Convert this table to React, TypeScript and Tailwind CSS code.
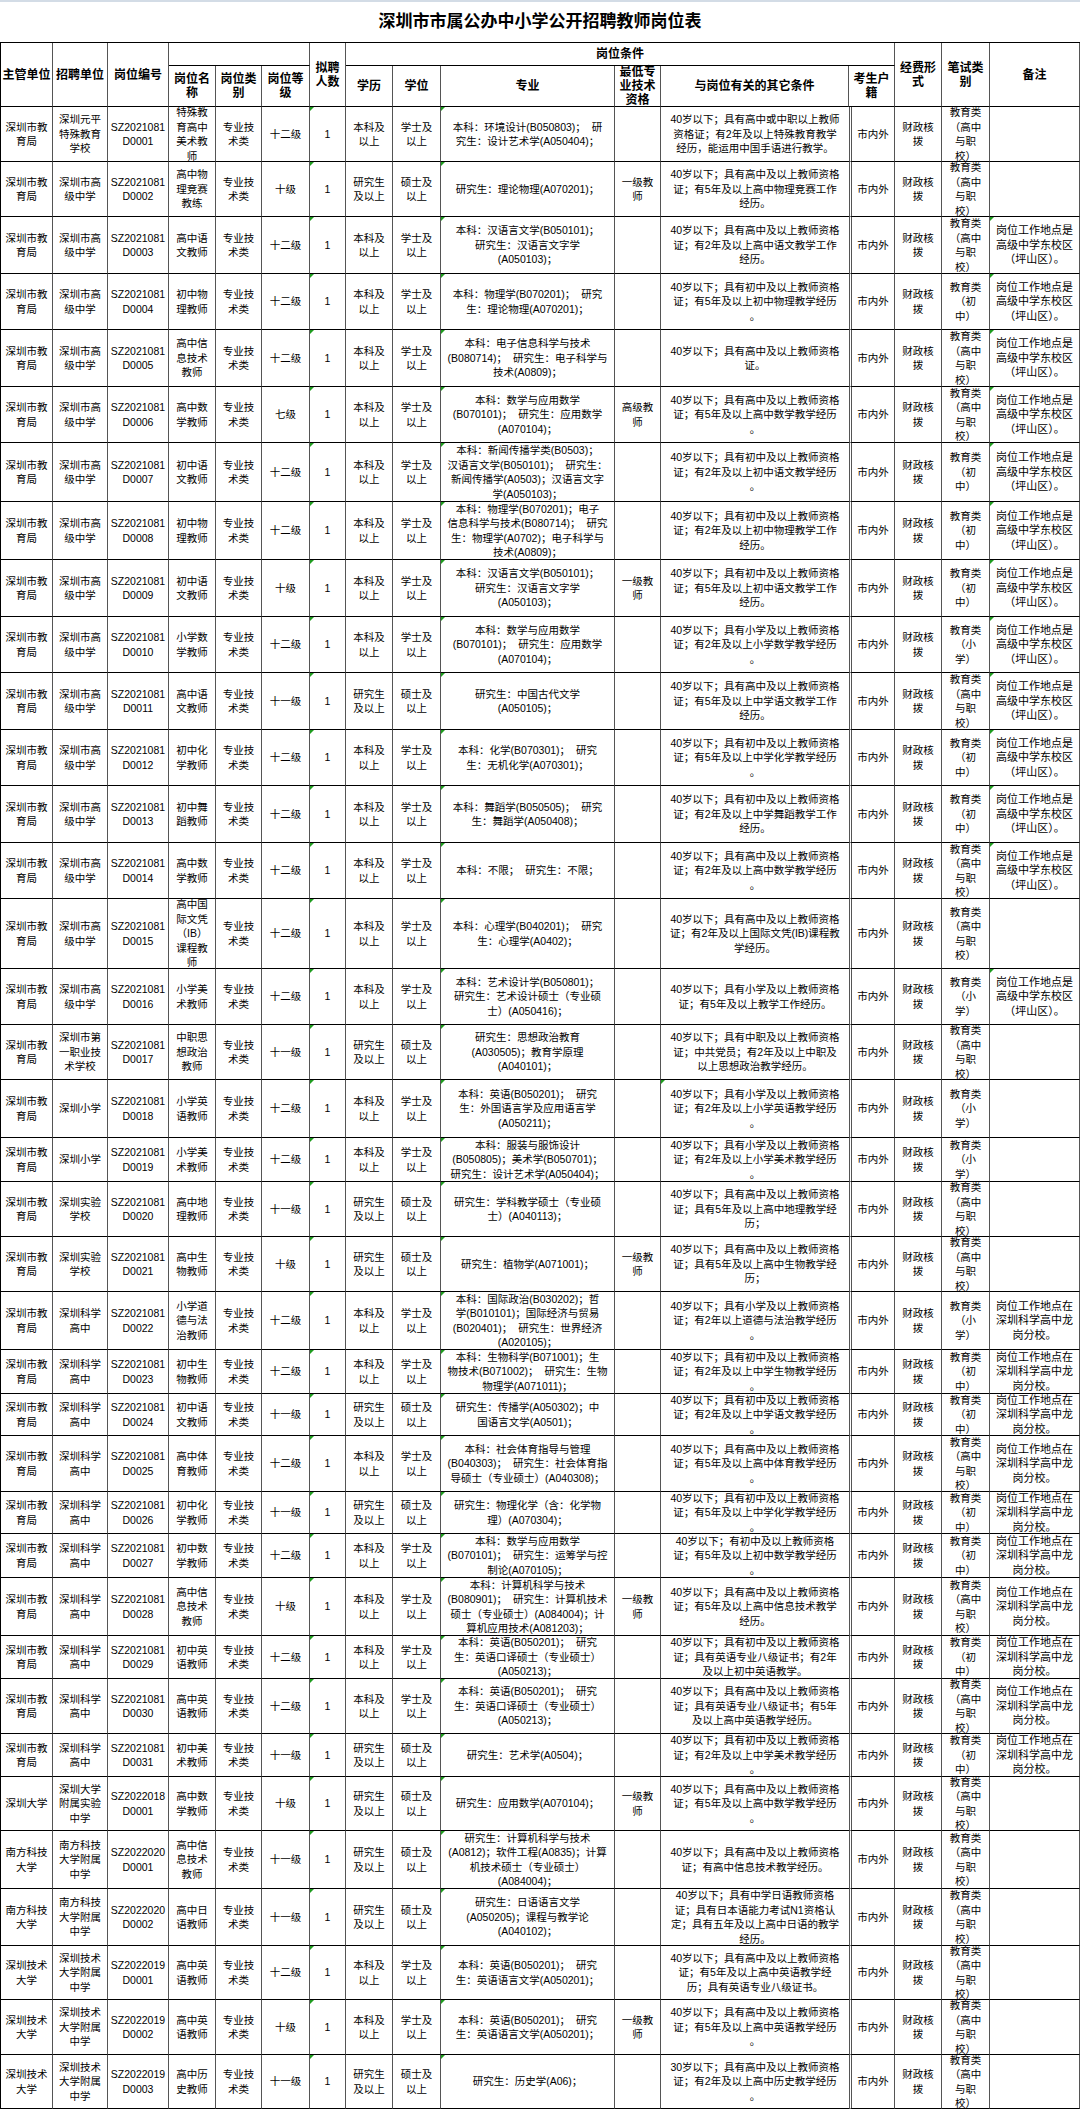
import type { ReactNode } from 'react'

const COLS =
  'grid grid-cols-[52px_55px_61px_47px_46px_48px_36px_47px_48px_174px_46px_188px_46px_47px_48px_90px]'

const ORG = '深圳市教\n育局'
const GAO = '深圳市高\n级中学'
const KX = '深圳科学\n高中'
const EXAM = {
  g: '教育类\n（高中\n与职\n校）',
  c: '教育类\n（初\n中）',
  x: '教育类\n（小\n学）',
}
const NOTE = ['', '岗位工作地点是\n高级中学东校区\n（坪山区）。', '岗位工作地点在\n深圳科学高中龙\n岗分校。']
const LVL1 = '一级教\n师'

type Row = {
  h: string
  org?: string
  unit: string
  code: string
  name: string
  grade: string
  y?: boolean
  major: string
  lvl?: string
  cond: string
  ex: 'g' | 'c' | 'x'
  note?: 1 | 2
  cm?: boolean
}

const ROWS: Row[] = [
  { h: 'h-[55px]', unit: '深圳元平\n特殊教育\n学校', code: 'SZ2021081\nD0001', name: '特殊教\n育高中\n美术教\n师', grade: '十二级', major: '本科：环境设计(B050803)；  研\n究生：设计艺术学(A050404)；', cond: '40岁以下；具有高中或中职以上教师\n资格证；有2年及以上特殊教育教学\n经历，能运用中国手语进行教学。', ex: 'g' },
  { h: 'h-[55px]', unit: GAO, code: 'SZ2021081\nD0002', name: '高中物\n理竞赛\n教练', grade: '十级', y: true, major: '研究生：理论物理(A070201)；', lvl: LVL1, cond: '40岁以下；具有高中及以上教师资格\n证；有5年及以上高中物理竞赛工作\n经历。', ex: 'g' },
  { h: 'h-[57px]', unit: GAO, code: 'SZ2021081\nD0003', name: '高中语\n文教师', grade: '十二级', major: '本科：汉语言文学(B050101)；\n研究生：汉语言文字学\n(A050103)；', cond: '40岁以下；具有高中及以上教师资格\n证；有2年及以上高中语文教学工作\n经历。', ex: 'g', note: 1 },
  { h: 'h-[56px]', unit: GAO, code: 'SZ2021081\nD0004', name: '初中物\n理教师', grade: '十二级', major: '本科：物理学(B070201)；  研究\n生：理论物理(A070201)；', cond: '40岁以下；具有初中及以上教师资格\n证；有5年及以上初中物理教学经历\n。', ex: 'c', note: 1 },
  { h: 'h-[57px]', unit: GAO, code: 'SZ2021081\nD0005', name: '高中信\n息技术\n教师', grade: '十二级', major: '本科：电子信息科学与技术\n(B080714)；  研究生：电子科学与\n技术(A0809)；', cond: '40岁以下；具有高中及以上教师资格\n证。', ex: 'g', note: 1 },
  { h: 'h-[56px]', unit: GAO, code: 'SZ2021081\nD0006', name: '高中数\n学教师', grade: '七级', major: '本科：数学与应用数学\n(B070101)；  研究生：应用数学\n(A070104)；', lvl: '高级教\n师', cond: '40岁以下；具有高中及以上教师资格\n证；有5年及以上高中数学教学经历\n。', ex: 'g', note: 1 },
  { h: 'h-[59px]', unit: GAO, code: 'SZ2021081\nD0007', name: '初中语\n文教师', grade: '十二级', major: '本科：新闻传播学类(B0503)；\n汉语言文学(B050101)；  研究生：\n新闻传播学(A0503)；汉语言文字\n学(A050103)；', cond: '40岁以下；具有初中及以上教师资格\n证；有2年及以上初中语文教学经历\n。', ex: 'c', note: 1 },
  { h: 'h-[58px]', unit: GAO, code: 'SZ2021081\nD0008', name: '初中物\n理教师', grade: '十二级', major: '本科：物理学(B070201)；电子\n信息科学与技术(B080714)；  研究\n生：物理学(A0702)；电子科学与\n技术(A0809)；', cond: '40岁以下；具有初中及以上教师资格\n证；有2年及以上初中物理教学工作\n经历。', ex: 'c', note: 1 },
  { h: 'h-[57px]', unit: GAO, code: 'SZ2021081\nD0009', name: '初中语\n文教师', grade: '十级', major: '本科：汉语言文学(B050101)；\n研究生：汉语言文字学\n(A050103)；', lvl: LVL1, cond: '40岁以下；具有初中及以上教师资格\n证；有5年及以上初中语文教学工作\n经历。', ex: 'c', note: 1 },
  { h: 'h-[56px]', unit: GAO, code: 'SZ2021081\nD0010', name: '小学数\n学教师', grade: '十二级', major: '本科：数学与应用数学\n(B070101)；  研究生：应用数学\n(A070104)；', cond: '40岁以下；具有小学及以上教师资格\n证；有2年及以上小学数学教学经历\n。', ex: 'x', note: 1 },
  { h: 'h-[57px]', unit: GAO, code: 'SZ2021081\nD0011', name: '高中语\n文教师', grade: '十一级', y: true, major: '研究生：中国古代文学\n(A050105)；', cond: '40岁以下；具有高中及以上教师资格\n证；有5年及以上中学语文教学工作\n经历。', ex: 'g', note: 1 },
  { h: 'h-[56px]', unit: GAO, code: 'SZ2021081\nD0012', name: '初中化\n学教师', grade: '十二级', major: '本科：化学(B070301)；  研究\n生：无机化学(A070301)；', cond: '40岁以下；具有初中及以上教师资格\n证；有5年及以上中学化学教学经历\n。', ex: 'c', note: 1 },
  { h: 'h-[57px]', unit: GAO, code: 'SZ2021081\nD0013', name: '初中舞\n蹈教师', grade: '十二级', major: '本科：舞蹈学(B050505)；  研究\n生：舞蹈学(A050408)；', cond: '40岁以下；具有初中及以上教师资格\n证；有2年及以上中学舞蹈教学工作\n经历。', ex: 'c', note: 1 },
  { h: 'h-[56px]', unit: GAO, code: 'SZ2021081\nD0014', name: '高中数\n学教师', grade: '十二级', major: '本科：不限；  研究生：不限；', cond: '40岁以下；具有高中及以上教师资格\n证；有2年及以上高中数学教学经历\n。', ex: 'g', note: 1 },
  { h: 'h-[70px]', unit: GAO, code: 'SZ2021081\nD0015', name: '高中国\n际文凭\n（IB）\n课程教\n师', grade: '十二级', major: '本科：心理学(B040201)；  研究\n生：心理学(A0402)；', cond: '40岁以下；具有高中及以上教师资格\n证；有2年及以上国际文凭(IB)课程教\n学经历。', ex: 'g' },
  { h: 'h-[56px]', unit: GAO, code: 'SZ2021081\nD0016', name: '小学美\n术教师', grade: '十二级', major: '本科：艺术设计学(B050801)；\n研究生：艺术设计硕士（专业硕\n士）(A050416)；', cond: '40岁以下；具有小学及以上教师资格\n证；有5年及以上教学工作经历。', ex: 'x', note: 1 },
  { h: 'h-[55px]', unit: '深圳市第\n一职业技\n术学校', code: 'SZ2021081\nD0017', name: '中职思\n想政治\n教师', grade: '十一级', y: true, major: '研究生：思想政治教育\n(A030505)；教育学原理\n(A040101)；', cond: '40岁以下；具有中职及以上教师资格\n证；中共党员；有2年及以上中职及\n以上思想政治教学经历。', ex: 'g' },
  { h: 'h-[58px]', unit: '深圳小学', code: 'SZ2021081\nD0018', name: '小学英\n语教师', grade: '十二级', major: '本科：英语(B050201)；  研究\n生：外国语言学及应用语言学\n(A050211)；', cond: '40岁以下；具有小学及以上教师资格\n证；有2年及以上小学英语教学经历\n。', ex: 'x', cm: true },
  { h: 'h-[44px]', unit: '深圳小学', code: 'SZ2021081\nD0019', name: '小学美\n术教师', grade: '十二级', major: '本科：服装与服饰设计\n(B050805)；美术学(B050701)；\n研究生：设计艺术学(A050404)；', cond: '40岁以下；具有小学及以上教师资格\n证；有2年及以上小学美术教学经历\n。', ex: 'x' },
  { h: 'h-[55px]', unit: '深圳实验\n学校', code: 'SZ2021081\nD0020', name: '高中地\n理教师', grade: '十一级', y: true, major: '研究生：学科教学硕士（专业硕\n士）(A040113)；', cond: '40岁以下；具有高中及以上教师资格\n证；具有5年及以上高中地理教学经\n历；', ex: 'g' },
  { h: 'h-[55px]', unit: '深圳实验\n学校', code: 'SZ2021081\nD0021', name: '高中生\n物教师', grade: '十级', y: true, major: '研究生：植物学(A071001)；', lvl: LVL1, cond: '40岁以下；具有高中及以上教师资格\n证；具有5年及以上高中生物教学经\n历；', ex: 'g' },
  { h: 'h-[58px]', unit: KX, code: 'SZ2021081\nD0022', name: '小学道\n德与法\n治教师', grade: '十二级', major: '本科：国际政治(B030202)；哲\n学(B010101)；国际经济与贸易\n(B020401)；  研究生：世界经济\n(A020105)；', cond: '40岁以下；具有小学及以上教师资格\n证；有2年以上道德与法治教学经历\n。', ex: 'x', note: 2 },
  { h: 'h-[44px]', unit: KX, code: 'SZ2021081\nD0023', name: '初中生\n物教师', grade: '十二级', major: '本科：生物科学(B071001)；生\n物技术(B071002)；  研究生：生物\n物理学(A071011)；', cond: '40岁以下；具有初中及以上教师资格\n证；有2年及以上中学生物教学经历\n。', ex: 'c', note: 2 },
  { h: 'h-[42px]', unit: KX, code: 'SZ2021081\nD0024', name: '初中语\n文教师', grade: '十一级', y: true, major: '研究生：传播学(A050302)；中\n国语言文学(A0501)；', cond: '40岁以下；具有初中及以上教师资格\n证；有2年及以上中学语文教学经历\n。', ex: 'c', note: 2 },
  { h: 'h-[56px]', unit: KX, code: 'SZ2021081\nD0025', name: '高中体\n育教师', grade: '十二级', major: '本科：社会体育指导与管理\n(B040303)；  研究生：社会体育指\n导硕士（专业硕士）(A040308)；', cond: '40岁以下；具有高中及以上教师资格\n证；有5年及以上高中体育教学经历\n。', ex: 'g', note: 2 },
  { h: 'h-[42px]', unit: KX, code: 'SZ2021081\nD0026', name: '初中化\n学教师', grade: '十一级', y: true, major: '研究生：物理化学（含：化学物\n理）(A070304)；', cond: '40岁以下；具有初中及以上教师资格\n证；有5年及以上中学化学教学经历\n。', ex: 'c', note: 2 },
  { h: 'h-[44px]', unit: KX, code: 'SZ2021081\nD0027', name: '初中数\n学教师', grade: '十二级', major: '本科：数学与应用数学\n(B070101)；  研究生：运筹学与控\n制论(A070105)；', cond: '40岁以下；有初中及以上教师资格\n证；有5年及以上初中数学教学经历\n。', ex: 'c', note: 2 },
  { h: 'h-[58px]', unit: KX, code: 'SZ2021081\nD0028', name: '高中信\n息技术\n教师', grade: '十级', major: '本科：计算机科学与技术\n(B080901)；  研究生：计算机技术\n硕士（专业硕士）(A084004)；计\n算机应用技术(A081203)；', lvl: LVL1, cond: '40岁以下；具有高中及以上教师资格\n证；有5年及以上高中信息技术教学\n经历。', ex: 'g', note: 2 },
  { h: 'h-[43px]', unit: KX, code: 'SZ2021081\nD0029', name: '初中英\n语教师', grade: '十二级', major: '本科：英语(B050201)；  研究\n生：英语口译硕士（专业硕士）\n(A050213)；', cond: '40岁以下；具有初中及以上教师资格\n证；具有英语专业八级证书；有2年\n及以上初中英语教学。', ex: 'c', note: 2 },
  { h: 'h-[55px]', unit: KX, code: 'SZ2021081\nD0030', name: '高中英\n语教师', grade: '十二级', major: '本科：英语(B050201)；  研究\n生：英语口译硕士（专业硕士）\n(A050213)；', cond: '40岁以下；具有高中及以上教师资格\n证；具有英语专业八级证书；有5年\n及以上高中英语教学经历。', ex: 'g', note: 2 },
  { h: 'h-[43px]', unit: KX, code: 'SZ2021081\nD0031', name: '初中美\n术教师', grade: '十一级', y: true, major: '研究生：艺术学(A0504)；', cond: '40岁以下；具有初中及以上教师资格\n证；有2年及以上中学美术教学经历\n。', ex: 'c', note: 2 },
  { h: 'h-[54px]', org: '深圳大学', unit: '深圳大学\n附属实验\n中学', code: 'SZ2022018\nD0001', name: '高中数\n学教师', grade: '十级', y: true, major: '研究生：应用数学(A070104)；', lvl: LVL1, cond: '40岁以下；具有高中及以上教师资格\n证；有5年及以上高中数学教学经历\n。', ex: 'g' },
  { h: 'h-[58px]', org: '南方科技\n大学', unit: '南方科技\n大学附属\n中学', code: 'SZ2022020\nD0001', name: '高中信\n息技术\n教师', grade: '十一级', y: true, major: '研究生：计算机科学与技术\n(A0812)；软件工程(A0835)；计算\n机技术硕士（专业硕士）\n(A084004)；', cond: '40岁以下；具有高中及以上教师资格\n证；有高中信息技术教学经历。', ex: 'g' },
  { h: 'h-[57px]', org: '南方科技\n大学', unit: '南方科技\n大学附属\n中学', code: 'SZ2022020\nD0002', name: '高中日\n语教师', grade: '十一级', y: true, major: '研究生：日语语言文学\n(A050205)；课程与教学论\n(A040102)；', cond: '40岁以下；具有中学日语教师资格\n证；具有日本语能力考试N1资格认\n定；具有五年及以上高中日语的教学\n经历。', ex: 'g' },
  { h: 'h-[54px]', org: '深圳技术\n大学', unit: '深圳技术\n大学附属\n中学', code: 'SZ2022019\nD0001', name: '高中英\n语教师', grade: '十二级', major: '本科：英语(B050201)；  研究\n生：英语语言文学(A050201)；', cond: '40岁以下；具有高中及以上教师资格\n证；有5年及以上高中英语教学经\n历；具有英语专业八级证书。', ex: 'g' },
  { h: 'h-[55px]', org: '深圳技术\n大学', unit: '深圳技术\n大学附属\n中学', code: 'SZ2022019\nD0002', name: '高中英\n语教师', grade: '十级', major: '本科：英语(B050201)；  研究\n生：英语语言文学(A050201)；', lvl: LVL1, cond: '40岁以下；具有高中及以上教师资格\n证；有5年及以上高中英语教学经历\n。', ex: 'g' },
  { h: 'h-[54px]', org: '深圳技术\n大学', unit: '深圳技术\n大学附属\n中学', code: 'SZ2022019\nD0003', name: '高中历\n史教师', grade: '十一级', y: true, major: '研究生：历史学(A06)；', cond: '30岁以下；具有高中及以上教师资格\n证；有2年及以上高中历史教学经历\n。', ex: 'g' },
]

function Cell({
  children,
  className = '',
  mark = false,
}: {
  children?: ReactNode
  className?: string
  mark?: boolean
}) {
  return (
    <div
      className={`relative flex items-center justify-center overflow-hidden border-r border-b border-r-[#555] border-b-black text-center whitespace-pre ${className}`}
    >
      {mark && (
        <span className="absolute top-0 left-0 h-0 w-0 border-t-[4px] border-r-[4px] border-t-[#1f9d1f] border-r-transparent" />
      )}
      {children}
    </div>
  )
}

function Head({ children, className = '' }: { children?: ReactNode; className?: string }) {
  return (
    <div
      className={`flex items-center justify-center border-r border-b border-r-[#555] border-b-black text-center text-[12px] leading-[14px] font-bold whitespace-pre ${className}`}
    >
      {children}
    </div>
  )
}

export default function App() {
  return (
    <div className="w-[1080px] bg-white pb-[2px] font-['Liberation_Sans','Noto_Sans_CJK_SC',sans-serif] text-black">
      <div className="flex h-[42px] items-center justify-center border-t-2 border-[#d3dce6]">
        <h1 className="text-[17px] font-bold">深圳市市属公办中小学公开招聘教师岗位表</h1>
      </div>

      <div className="border-l border-l-black">
        {/* 表头 */}
        <div className={`${COLS} grid-rows-[23px_41px] border-t border-t-black`}>
          <Head className="row-span-2">主管单位</Head>
          <Head className="row-span-2">招聘单位</Head>
          <Head className="row-span-2">岗位编号</Head>
          <Head className="col-span-3" />
          <Head className="row-span-2">{'拟聘\n人数'}</Head>
          <Head className="col-span-6">岗位条件</Head>
          <Head className="row-span-2">{'经费形\n式'}</Head>
          <Head className="row-span-2">{'笔试类\n别'}</Head>
          <Head className="row-span-2">备注</Head>
          <Head>{'岗位名\n称'}</Head>
          <Head>{'岗位类\n别'}</Head>
          <Head>{'岗位等\n级'}</Head>
          <Head>学历</Head>
          <Head>学位</Head>
          <Head>专业</Head>
          <Head>{'最低专\n业技术\n资格'}</Head>
          <Head>与岗位有关的其它条件</Head>
          <Head>{'考生户\n籍'}</Head>
        </div>

        {/* 岗位行 */}
        <div className="text-[10.5px] leading-[14.5px]">
          {ROWS.map((r) => (
            <div key={r.code} className={`${COLS} ${r.h}`}>
              <Cell>{r.org ?? ORG}</Cell>
              <Cell>{r.unit}</Cell>
              <Cell>{r.code}</Cell>
              <Cell>{r.name}</Cell>
              <Cell>{'专业技\n术类'}</Cell>
              <Cell>{r.grade}</Cell>
              <Cell mark>1</Cell>
              <Cell>{r.y ? '研究生\n及以上' : '本科及\n以上'}</Cell>
              <Cell>{r.y ? '硕士及\n以上' : '学士及\n以上'}</Cell>
              <Cell mark>{r.major}</Cell>
              <Cell>{r.lvl ?? ''}</Cell>
              <Cell mark={r.cm} className="border-r-0">
                {r.cond}
              </Cell>
              <Cell className="border-l-[3px] border-double border-l-[#555]">市内外</Cell>
              <Cell>{'财政核\n拨'}</Cell>
              <Cell>{EXAM[r.ex]}</Cell>
              <Cell mark={r.note === 1} className="text-[11px]">
                {r.note ? NOTE[r.note] : ''}
              </Cell>
            </div>
          ))}
        </div>
      </div>
    </div>
  )
}
